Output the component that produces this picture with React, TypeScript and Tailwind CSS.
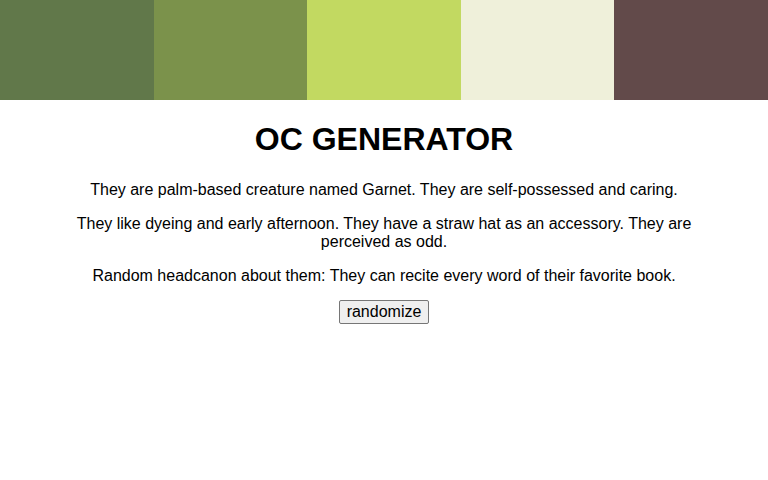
import React from "react";

const colors = ["bg-[#61784a]", "bg-[#7b924b]", "bg-[#c2d961]", "bg-[#eff0da]", "bg-[#624a4a]"];

export default function App() {
  return (
    <div className="min-h-[480px] bg-white text-black" style={{ fontFamily: '"Liberation Sans", Arial, sans-serif' }}>
      <div className="flex h-[100px]">
        {colors.map((c, i) => (
          <div key={i} className={`flex-1 ${c}`} />
        ))}
      </div>
      <div className="px-16 text-center text-base leading-[18px]">
        <h1 className="mt-[21px] mb-[22px] text-[32px] font-bold leading-[37px]">OC GENERATOR</h1>
        <p className="mb-[15px] pt-[1px]">They are palm-based creature named Garnet. They are self-possessed and caring.</p>
        <p className="mb-[15px] pt-[1px]">They like dyeing and early afternoon. They have a straw hat as an accessory. They are perceived as odd.</p>
        <p className="mb-[15px] pt-[1px]">Random headcanon about them: They can recite every word of their favorite book.</p>
        <button className="h-[24px] rounded-[2px] border border-[#767676] bg-[#efefef] px-[7px] text-base leading-[18px] text-black">
          randomize
        </button>
      </div>
    </div>
  );
}
